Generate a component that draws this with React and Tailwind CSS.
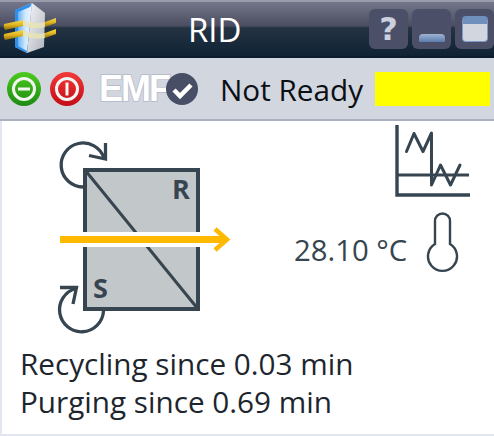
import { useState } from "react";

const uiFont = "font-['Open_Sans','Noto_Sans',sans-serif]";

function Logo() {
  return (
    <svg width="60" height="54" viewBox="0 2 60 54" className="shrink-0">
      <defs>
        <linearGradient id="prism-blue" x1="0" y1="0" x2="1" y2="0">
          <stop offset="0" stopColor="#3f9df0" />
          <stop offset="0.6" stopColor="#cfe8ff" />
          <stop offset="1" stopColor="#eef6ff" />
        </linearGradient>
        <linearGradient id="prism-white" x1="0" y1="0" x2="1" y2="1">
          <stop offset="0" stopColor="#f5f7fa" />
          <stop offset="1" stopColor="#b0b4bb" />
        </linearGradient>
        <linearGradient id="rod" x1="0" y1="0" x2="0" y2="1">
          <stop offset="0" stopColor="#f7d84a" />
          <stop offset="0.5" stopColor="#e0b420" />
          <stop offset="1" stopColor="#8a6a08" />
        </linearGradient>
      </defs>
      <path d="M15 10 L32 3 L27 53 L15 47 Z" fill="url(#prism-blue)" />
      <path d="M15 10 L32 3 L30 7 L18 12 L18 46 L27 51 L27 53 L15 47 Z" fill="#2f8fe8" />
      <path d="M32 3 L45 13 L44 47 L27 53 Z" fill="url(#prism-white)" />
      <path d="M4 24 L23 20 L23 26 L5 30 Q3 27 4 24 Z" fill="url(#rod)" />
      <path d="M4 34 L23 30 L23 36 L5 40 Q3 37 4 34 Z" fill="url(#rod)" />
      <path d="M45 22 L56 18 L56 23 L45 27 Z" fill="url(#rod)" />
      <path d="M45 33 L56 29 L56 34 L45 38 Z" fill="url(#rod)" />
      <path d="M23 20 Q34 25 45 22 L45 27 Q34 30 23 26 Z" fill="#e9e5b4" opacity="0.8" />
      <path d="M23 30 Q34 35 45 33 L45 38 Q34 40 23 36 Z" fill="#e9e5b4" opacity="0.8" />
    </svg>
  );
}

function WindowButton({ children }) {
  return (
    <button className="flex h-10 w-[39px] items-center justify-center rounded-md bg-[#4b5068]">
      {children}
    </button>
  );
}

function Header() {
  return (
    <div className="flex h-[58px] items-center border-t-2 border-b-2 border-t-[#9a9cab] border-b-[#0c1c2c] bg-[linear-gradient(#74778a_0%,#4a4e60_44%,#243342_48%,#0f2234_100%)]">
      <Logo />
      <div className={`flex-1 pl-[128px] text-[33px] leading-none text-white ${uiFont}`}>RID</div>
      <div className="flex gap-[4px]">
        <WindowButton>
          <span className="font-['DejaVu_Sans',sans-serif] text-[32px] leading-none font-bold text-[#ccd0de]">?</span>
        </WindowButton>
        <WindowButton>
          <div className="mt-[18px] h-2 w-[26px] rounded-t-sm bg-[linear-gradient(#9db4d6,#5b7cab)]" />
        </WindowButton>
        <WindowButton>
          <div className="h-[26px] w-[26px] rounded-sm border border-[#7f9cc6] border-t-[8px] border-t-[#6f8fbd] bg-[#d1d6df]" />
        </WindowButton>
      </div>
    </div>
  );
}

function RoundIcon({ from, to, glyph }) {
  return (
    <svg width="34" height="34" viewBox="0 0 34 34" className="shrink-0">
      <defs>
        <linearGradient id={`ring-${glyph}`} x1="0" y1="0" x2="0" y2="1">
          <stop offset="0" stopColor={from} />
          <stop offset="1" stopColor={to} />
        </linearGradient>
      </defs>
      <circle cx="17" cy="17" r="17" fill={`url(#ring-${glyph})`} />
      <circle cx="17" cy="17" r="10.5" fill="none" stroke="#f3f5f3" strokeWidth="3" />
      {glyph === "stop" ? (
        <rect x="11" y="15.5" width="12" height="3" fill="#f3f5f3" />
      ) : (
        <rect x="15.5" y="10.5" width="3" height="13" fill="#f3f5f3" />
      )}
    </svg>
  );
}

function Toolbar() {
  return (
    <div className="flex h-[63px] items-center border-b-2 border-[#aab0c0] bg-[#d1d6df]">
      <div className="ml-[7px] flex gap-[9px]">
        <RoundIcon from="#4ccb1e" to="#1d8a12" glyph="stop" />
        <RoundIcon from="#f23a3a" to="#c30c14" glyph="power" />
      </div>
      <span className="ml-[15px] w-[67px] font-['Liberation_Sans',sans-serif] text-[36px] leading-none font-bold tracking-[-2px] whitespace-nowrap text-white [-webkit-text-stroke:1.5px_#b4b9c9] [paint-order:stroke_fill]">
        EMF
      </span>
      <svg width="32" height="32" viewBox="0 0 32 32" className="shrink-0">
        <circle cx="16" cy="16" r="16" fill="#474e66" />
        <path d="M8 17 L14 23 L25 12" fill="none" stroke="#fff" strokeWidth="4.5" />
      </svg>
      <span className={`ml-[22px] pt-[2px] text-[29.7px] leading-none whitespace-nowrap text-[#0b0f14] ${uiFont}`}>Not Ready</span>
      <div className="ml-[12px] h-[34px] w-[115px] bg-[#ffff00]" />
    </div>
  );
}

// diagram coordinates are page px, viewBox keeps them as read from the reference
function ValveDiagram() {
  const c = "#36454f";
  return (
    <svg width="180" height="210" viewBox="55 124 180 210" className="shrink-0">
      <rect x="85" y="170" width="113" height="139" fill="#c2c7ca" stroke={c} strokeWidth="4" />
      <path d="M85 170 L198 309" stroke={c} strokeWidth="3" />
      <path d="M83 187 A22 22 0 1 1 104 158" fill="none" stroke={c} strokeWidth="3.3" />
      <path d="M105.5 143 V159 L89 155.5" fill="none" stroke={c} strokeWidth="3.3" />
      <path d="M103.5 311 A22 22 0 1 1 76 288.5" fill="none" stroke={c} strokeWidth="3.3" />
      <path d="M60 287.5 H76.5 L73 304" fill="none" stroke={c} strokeWidth="3.3" />
      <rect x="83" y="232" width="117" height="15" fill="#fff" />
      <rect x="60" y="236" width="164" height="7" fill="#ffb900" />
      <path d="M215 229 L227 239.5 L215 250" fill="none" stroke="#ffb900" strokeWidth="4.5" />
      <text x="172" y="199" fontFamily="Open Sans" fontWeight="700" fontSize="27" fill={c}>R</text>
      <text x="93" y="298" fontFamily="Open Sans" fontWeight="700" fontSize="27" fill={c}>S</text>
    </svg>
  );
}

function ChartIcon() {
  const c = "#36454f";
  return (
    <svg width="76" height="73" viewBox="395 124 76 73" className="block">
      <path d="M397 125 V195 H470" fill="none" stroke={c} strokeWidth="3.4" />
      <path d="M397 175 H469" stroke={c} strokeWidth="3" />
      <path
        d="M406.5 151.5 L414 133.5 L423 151.5 L431.5 133 V185 L440.5 165 L450.5 185 L460 165"
        fill="none"
        stroke={c}
        strokeWidth="3"
        strokeLinejoin="round"
        strokeLinecap="round"
      />
    </svg>
  );
}

function Thermometer() {
  return (
    <svg width="34" height="62" viewBox="425 211 34 62" className="shrink-0">
      <path
        d="M435 244 V221 A7.5 7.5 0 0 1 450 221 V244 A14.5 14.5 0 1 1 435 244 Z"
        fill="none"
        stroke="#36454f"
        strokeWidth="2.4"
      />
    </svg>
  );
}

export default function App() {
  const [status] = useState([
    "Recycling since 0.03 min",
    "Purging since 0.69 min",
  ]);

  return (
    <div className="h-[436px] w-[494px] overflow-hidden bg-white">
      <Header />
      <Toolbar />
      <div className="flex h-[315px] flex-col border-b-2 border-l-2 border-[#e2e6ef]">
        <div className="flex pl-[53px] pt-[3px]">
          <ValveDiagram />
          <div className="flex flex-col pl-[59px]">
            <div className="pl-[101px]">
              <ChartIcon />
            </div>
            <div className="mt-[14px] flex items-center">
              <span className={`w-[113px] pt-[18px] text-[29.3px] leading-none whitespace-nowrap text-[#36454f] ${uiFont}`}>28.10 °C</span>
              <div className="ml-[18px]">
                <Thermometer />
              </div>
            </div>
          </div>
        </div>
        <div className={`pl-[18px] pt-[11px] text-[29.7px] leading-[38px] text-[#1d262e] ${uiFont}`}>
          {status.map((line) => (
            <div key={line}>{line}</div>
          ))}
        </div>
      </div>
    </div>
  );
}
